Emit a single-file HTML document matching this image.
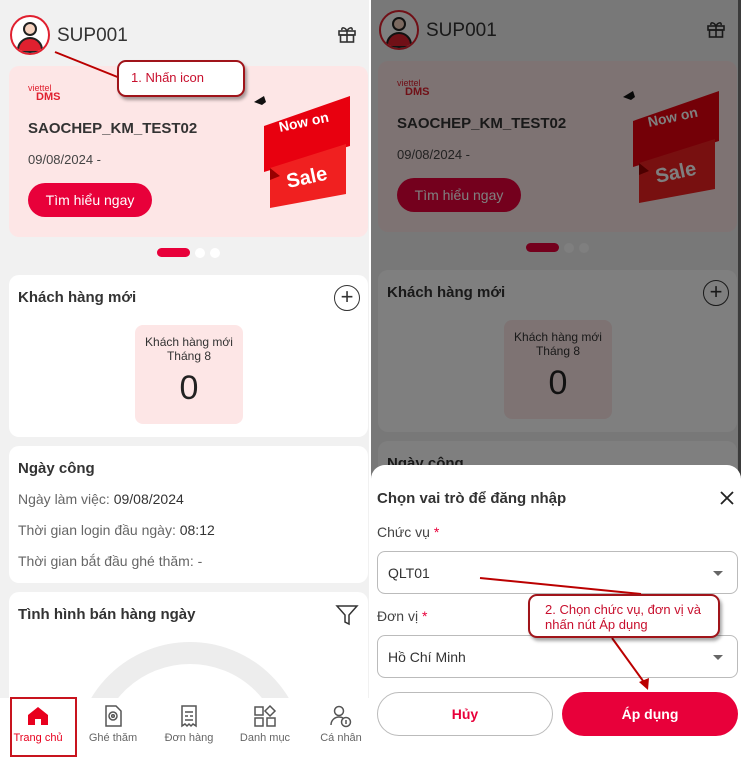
<!DOCTYPE html>
<html><head><meta charset="utf-8">
<style>
*{box-sizing:border-box;margin:0;padding:0}
html,body{width:741px;height:760px;overflow:hidden}
body{background:#fff;font-family:"Liberation Sans","Noto Sans CJK SC",sans-serif;position:relative;color:#222}
.a{position:absolute}
.panel{position:absolute;top:0;width:369px;height:760px;overflow:hidden;background:#f1f1f1}
.card{position:absolute;left:9px;width:359px;background:#fff;border-radius:10px}
.t{position:absolute;white-space:nowrap}
.nav{position:absolute;left:0;top:698px;width:370px;height:62px;background:#fff}
.nl{position:absolute;top:34px;font-size:11px;color:#666;width:76px;text-align:center}
</style></head><body>

<div class="panel" id="L" style="left:0">
 <div class="a" style="left:10px;top:15px;width:40px;height:40px;border-radius:50%;border:2px solid #e0202f;background:#fff;overflow:hidden">
  <div class="a" style="left:11px;top:5px;width:14px;height:14px;border-radius:50%;background:#f6d3c0;border:2px solid #222"></div>
  <div class="a" style="left:5px;top:20px;width:26px;height:16px;border-radius:13px 13px 3px 3px;background:#e0202f;border:2px solid #222"></div>
 </div>
 <div class="t" style="left:57px;top:25px;font-size:19px;color:#333">SUP001</div>
 <svg class="a" style="left:337px;top:24px" width="20" height="20" viewBox="0 0 20 20" fill="none" stroke="#333" stroke-width="1.6"><rect x="2" y="7" width="16" height="4"/><rect x="3.5" y="11" width="13" height="7"/><path d="M10 7v11M10 7C8 3 4 3 5 6M10 7c2-4 6-4 5-1"/></svg>

 <div class="a" style="left:9px;top:66px;width:359px;height:171px;background:#fde6e6;border-radius:10px"></div>
 <div class="t" style="left:28px;top:84px;font-size:9px;color:#e0202f;line-height:9px">viettel<br><b style="font-size:11px;padding-left:8px">DMS</b></div>
 <div class="t" style="left:28px;top:120px;font-size:15px;font-weight:bold;color:#333">SAOCHEP_KM_TEST02</div>
 <div class="t" style="left:28px;top:152px;font-size:13px;color:#444">09/08/2024 -</div>
 <div class="a" style="left:28px;top:183px;width:124px;height:34px;border-radius:17px;background:#e8003a;color:#fff;font-size:14px;text-align:center;line-height:34px">Tìm hiểu ngay</div>
 <svg class="a" style="left:250px;top:92px" width="105" height="118" viewBox="0 0 105 118">
  <path d="M4 10l10-6 2 6-4 3z" fill="#111"/>
  <path d="M14 34L100 4v50L14 80z" fill="#e8000f"/>
  <path d="M20 76L96 52v50L20 116z" fill="#f02020"/>
  <path d="M20 76l10 8-10 4z" fill="#900"/>
  <text x="30" y="40" fill="#fff" font-size="14" font-weight="bold" transform="rotate(-12 30 40)" font-family="Liberation Sans">Now on</text>
  <text x="38" y="96" fill="#fff" font-size="20" font-weight="bold" transform="rotate(-12 38 96)" font-family="Liberation Sans">Sale</text>
 </svg>
 <div class="a" style="left:157px;top:248px;width:33px;height:9px;border-radius:5px;background:#e8003a"></div>
 <div class="a" style="left:195px;top:248px;width:10px;height:10px;border-radius:50%;background:#fff"></div>
 <div class="a" style="left:210px;top:248px;width:10px;height:10px;border-radius:50%;background:#fff"></div>

 <div class="card" style="top:275px;height:162px">
  <div class="t" style="left:9px;top:14px;font-size:15px;font-weight:bold;color:#333">Khách hàng mới</div>
  <div class="a" style="left:325px;top:10px;width:26px;height:26px;border-radius:50%;border:1.5px solid #333;text-align:center;line-height:22px;font-size:22px;color:#333">+</div>
  <div class="a" style="left:126px;top:50px;width:108px;height:99px;background:#fde6e6;border-radius:8px;text-align:center;font-size:12px;color:#333;line-height:14px;padding-top:10px">Khách hàng mới<br>Tháng 8<div style="font-size:34px;line-height:50px;color:#222">0</div></div>
 </div>

 <div class="card" style="top:446px;height:137px">
  <div class="t" style="left:9px;top:14px;font-size:15px;font-weight:bold;color:#333">Ngày công</div>
  <div class="t" style="left:9px;top:45px;font-size:14px;color:#666">Ngày làm việc: <span style="color:#333">09/08/2024</span></div>
  <div class="t" style="left:9px;top:76px;font-size:14px;color:#666">Thời gian login đầu ngày: <span style="color:#333">08:12</span></div>
  <div class="t" style="left:9px;top:107px;font-size:14px;color:#666">Thời gian bắt đầu ghé thăm: -</div>
 </div>

 <div class="card" style="top:592px;height:168px;overflow:hidden">
  <div class="t" style="left:9px;top:14px;font-size:15px;font-weight:bold;color:#333">Tình hình bán hàng ngày</div>
  <svg class="a" style="left:326px;top:11px" width="24" height="24" viewBox="0 0 24 24" fill="none" stroke="#333" stroke-width="1.5"><path d="M2 3h20l-8 9v9l-4-2v-7z"/></svg>
  <div class="a" style="left:66px;top:50px;width:230px;height:230px;border-radius:50%;border:22px solid #ededed"></div>
 </div>

 <div class="nav">
  <svg class="a" style="left:27px;top:8px" width="22" height="20" viewBox="0 0 22 20"><path d="M11 1L1 9v10h7v-6h6v6h7V9z" fill="#e8001e"/></svg>
  <div class="nl" style="left:0;color:#e8001e">Trang chủ</div>
  <svg class="a" style="left:103px;top:6px" width="20" height="24" viewBox="0 0 20 24" fill="none" stroke="#555" stroke-width="1.5"><path d="M3 2h10l5 5v15H3z"/><circle cx="10" cy="12" r="4"/><circle cx="10" cy="12" r="1.3"/></svg>
  <div class="nl" style="left:75px">Ghé thăm</div>
  <svg class="a" style="left:179px;top:6px" width="20" height="24" viewBox="0 0 20 24" fill="none" stroke="#555" stroke-width="1.5"><path d="M3 2h14v20l-3-2-2 2-2-2-2 2-2-2-3 2z"/><path d="M6 8h8M6 12h3M11 12h3M6 16h8"/></svg>
  <div class="nl" style="left:151px">Đơn hàng</div>
  <svg class="a" style="left:253px;top:6px" width="24" height="24" viewBox="0 0 24 24" fill="none" stroke="#555" stroke-width="1.5"><rect x="2" y="3" width="8" height="8"/><path d="M17 2l5 5-5 5-5-5z"/><rect x="2" y="14" width="8" height="8"/><rect x="14" y="14" width="8" height="8"/></svg>
  <div class="nl" style="left:227px">Danh mục</div>
  <svg class="a" style="left:329px;top:6px" width="24" height="24" viewBox="0 0 24 24" fill="none" stroke="#555" stroke-width="1.5"><circle cx="10" cy="7" r="4.5"/><path d="M2 21c0-5 4-8 8-8 2 0 3 .4 4 1"/><circle cx="17" cy="18" r="4.5"/><path d="M17 16v4"/></svg>
  <div class="nl" style="left:303px">Cá nhân</div>
 </div>
 <div class="a" style="left:10px;top:697px;width:67px;height:60px;border:2px solid #c8141e"></div>

 <svg class="a" style="left:0;top:0" width="370" height="110"><path d="M55 52L125 80" stroke="#b00" stroke-width="2"/></svg>
 <div class="a" style="left:117px;top:60px;width:128px;height:37px;background:#fff;border:2px solid #a0141a;border-radius:9px;box-shadow:2px 3px 3px rgba(0,0,0,.35);color:#c8102e;font-size:13px;padding:8px 0 0 12px">1. Nhấn icon</div>
</div>

<div class="panel" style="left:371px;width:370px;background:#777">
 <div id="R" class="a" style="left:-2px;top:-5px;width:370px;height:760px"></div>
 <div class="a" style="left:0;top:0;width:370px;height:760px;background:rgba(0,0,0,.5)"></div>
 <div class="a" style="left:0;top:465px;width:370px;height:295px;background:#fff;border-radius:14px 14px 0 0"></div>
 <div class="t" style="left:6px;top:490px;font-size:15px;font-weight:bold;color:#333">Chọn vai trò để đăng nhập</div>
 <svg class="a" style="left:349px;top:491px" width="14" height="14" viewBox="0 0 14 14" stroke="#222" stroke-width="1.8"><path d="M1 1l12 12M13 1L1 13"/></svg>
 <div class="t" style="left:6px;top:524px;font-size:14px;color:#444">Chức vụ <span style="color:#e8003a">*</span></div>
 <div class="a" style="left:6px;top:551px;width:361px;height:43px;border:1px solid #bbb;border-radius:8px;font-size:14px;color:#333;padding:13px 0 0 10px">QLT01</div>
 <div class="a" style="left:342px;top:571px;border:5px solid transparent;border-top:5px solid #666"></div>
 <div class="t" style="left:6px;top:608px;font-size:14px;color:#444">Đơn vị <span style="color:#e8003a">*</span></div>
 <div class="a" style="left:6px;top:635px;width:361px;height:43px;border:1px solid #bbb;border-radius:8px;font-size:14px;color:#333;padding:13px 0 0 10px">Hồ Chí Minh</div>
 <div class="a" style="left:342px;top:655px;border:5px solid transparent;border-top:5px solid #666"></div>
 <div class="a" style="left:6px;top:692px;width:176px;height:44px;border:1px solid #bbb;border-radius:22px;text-align:center;line-height:42px;color:#e8003a;font-weight:bold;font-size:14px">Hủy</div>
 <div class="a" style="left:191px;top:692px;width:176px;height:44px;background:#e8003a;border-radius:22px;text-align:center;line-height:44px;color:#fff;font-weight:bold;font-size:14px">Áp dụng</div>
 <svg class="a" style="left:0;top:560px" width="370" height="140"><path d="M109 18L270 34" stroke="#b00" stroke-width="2"/><path d="M241 78L275 125" stroke="#b00" stroke-width="2"/><path d="M268 122l9 8 1-12z" fill="#b00"/></svg>
 <div class="a" style="left:157px;top:594px;width:192px;height:44px;background:#fff;border:2px solid #a0141a;border-radius:9px;box-shadow:2px 3px 3px rgba(0,0,0,.35);color:#c8102e;font-size:13px;line-height:15px;padding:6px 0 0 15px">2. Chọn chức vụ, đơn vị và<br>nhấn nút Áp dụng</div>
</div>
<script>
var L=document.getElementById('L').cloneNode(true);L.removeAttribute('id');
var R=document.getElementById('R');L.style.left='0';L.style.top='0';
var kids=L.children;for(var i=kids.length-1;i>=0;i--){var c=kids[i];if(c.classList.contains('nav')||c.style.top=='697px'||c.style.top=='60px'||(c.tagName=='svg'&&c.getAttribute('height')=='110'))c.remove();}
R.appendChild(L);
</script>
</body></html>
